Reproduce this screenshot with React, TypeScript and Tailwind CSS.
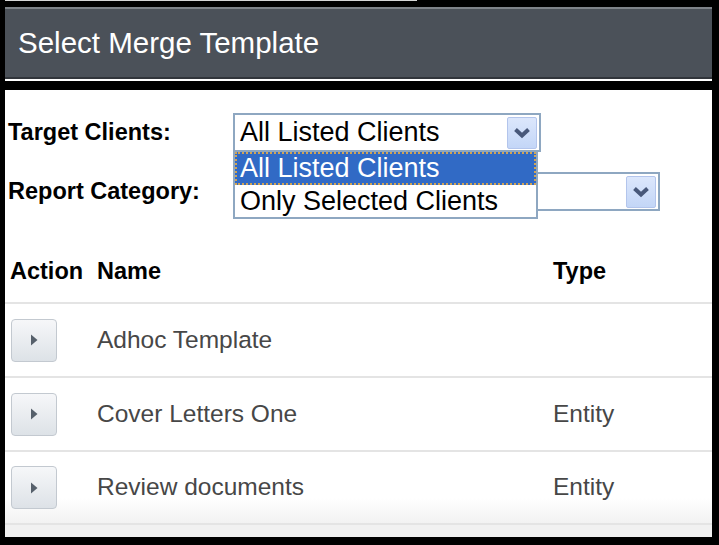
import React from "react";

const rows = [
  { name: "Adhoc Template", type: "" },
  { name: "Cover Letters One", type: "Entity" },
  { name: "Review documents", type: "Entity" },
];

const Chevron = () => (
  <svg width="18" height="12" viewBox="0 0 18 12" aria-hidden="true">
    <polyline
      points="2.5,2.5 9,8.5 15.5,2.5"
      fill="none"
      stroke="#48587a"
      strokeWidth="4"
    />
  </svg>
);

const ArrowBox = () => (
  <div className="w-[30px] h-[32px] mr-[2px] flex items-center justify-center rounded-[2px] border border-[#b3c5ec] bg-[linear-gradient(#dce7fc,#c3d6f7)]">
    <Chevron />
  </div>
);

const Select = ({ value, width }: { value: string; width: string }) => (
  <div
    className={`${width} h-[39px] border-2 border-[#8ea7c1] bg-white flex items-center justify-between`}
  >
    <span className="pl-[5px] text-[27px] leading-none text-black">{value}</span>
    <ArrowBox />
  </div>
);

const PlayButton = () => (
  <div className="w-[46px] h-[43px] ml-[6px] flex items-center justify-center rounded-[4px] border border-[#c3c9d0] bg-[linear-gradient(#f6f7f9,#dde2e7)]">
    <svg width="7" height="12" viewBox="0 0 7 12" aria-hidden="true">
      <polygon points="0,0.5 6.5,6 0,11.5" fill="#56606b" />
    </svg>
  </div>
);

const App = () => {
  return (
    <div className="w-[719px] h-[545px] bg-black flex flex-col pl-[5px] pr-[7px] font-['Liberation_Sans',Arial,sans-serif]">
      <div className="h-[7px] shrink-0">
        <div className="h-[1px] w-[412px] bg-[#d6d6d6]" />
      </div>
      <div className="h-[72px] shrink-0 flex items-center pl-[13px] border-t-2 border-[#7e8389] border-b-2 border-b-[#31353b] bg-[#4b5159]">
        <span className="text-[29.5px] leading-none text-white">Select Merge Template</span>
      </div>
      <div className="h-[2px] shrink-0 bg-white" />
      <div className="h-[9px] shrink-0" />

      <div className="flex-1 bg-white relative flex flex-col">
        <div className="pt-[23px] grid grid-cols-[228px_1fr] gap-y-[20px] items-center">
          <div className="pl-[3px] text-[23.5px] font-bold text-black">Target Clients:</div>
          <Select value="All Listed Clients" width="w-[308px]" />
          <div className="pl-[3px] text-[23.5px] font-bold text-black">Report Category:</div>
          <Select value="" width="w-[427px]" />
        </div>

        {/* open dropdown list */}
        <div className="absolute left-[228px] top-[62px] w-[305px] h-[67px] border-2 border-t-0 border-[#8ea7c1] bg-white flex flex-col">
          <div className="h-[33px] flex items-center pl-[3px] bg-[#316ac5] border-2 border-dotted border-[#d1a455] text-white text-[27px] leading-none">
            All Listed Clients
          </div>
          <div className="h-[32px] flex items-center pl-[5px] text-black text-[27px] leading-none">
            Only Selected Clients
          </div>
        </div>

        <div className="mt-[31px] h-[62px] shrink-0 grid grid-cols-[92px_456px_1fr] items-center border-b-2 border-[#e4e4e4] text-[23.5px] font-bold text-black">
          <div className="pl-[5px]">Action</div>
          <div>Name</div>
          <div>Type</div>
        </div>

        {rows.map((row, i) => (
          <div
            key={i}
            className={`${i === 2 ? "h-[73px] bg-[linear-gradient(#ffffff_65%,#f2f2f2)]" : "h-[74px]"} shrink-0 grid grid-cols-[92px_456px_1fr] items-center border-b-2 border-[#e4e4e4] text-[24.5px] text-[#474747]`}
          >
            <PlayButton />
            <div>{row.name}</div>
            <div>{row.type}</div>
          </div>
        ))}
        <div className="flex-1 bg-[#f1f1f1]" />
      </div>
      <div className="h-[8px] shrink-0" />
    </div>
  );
};

export default App;
